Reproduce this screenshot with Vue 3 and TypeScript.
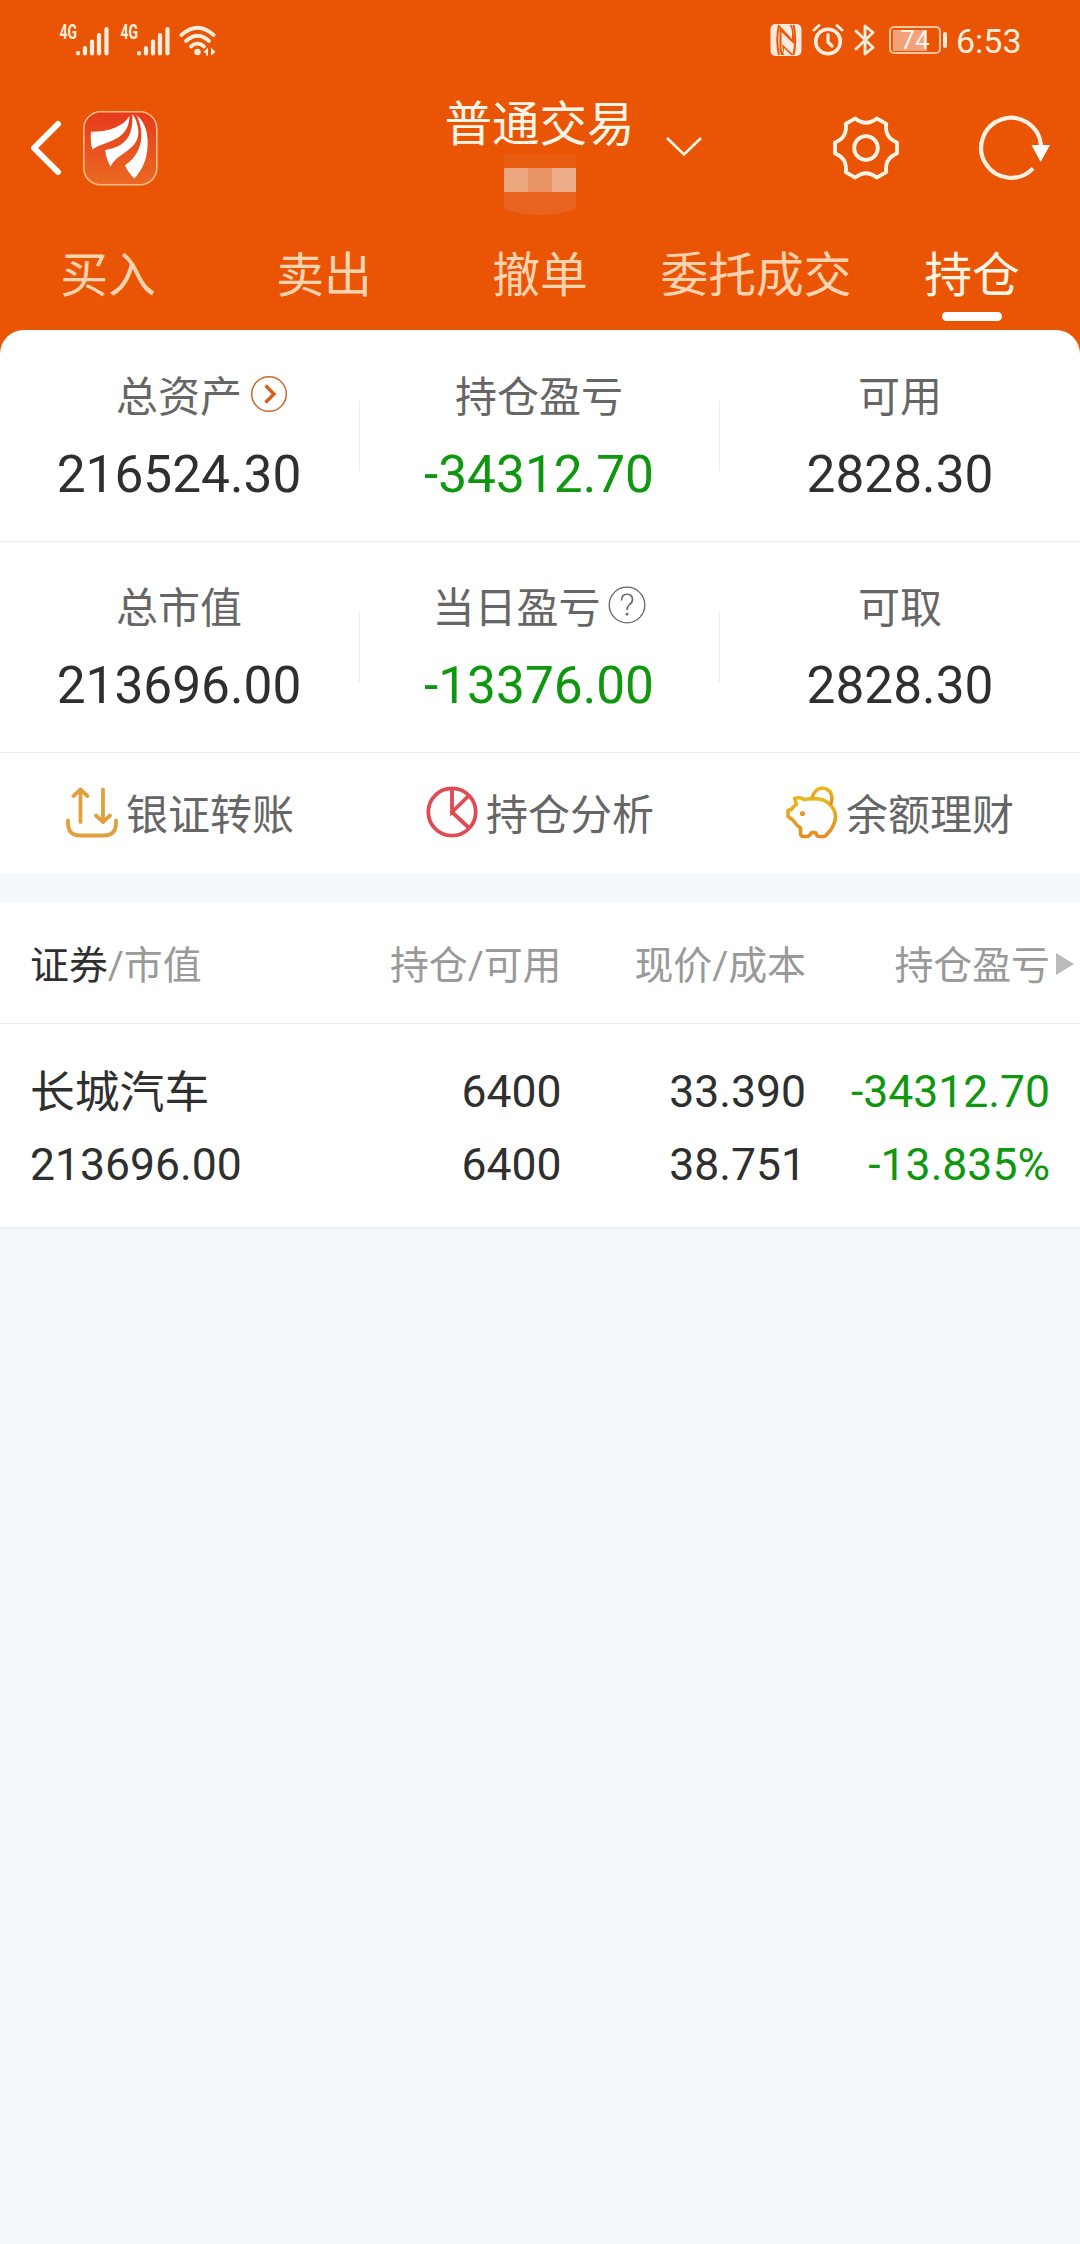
<script setup lang="ts">
interface Tab {
  label: string
  active?: boolean
}

interface Metric {
  label: string
  value: string
  green?: boolean
  icon?: 'arrow' | 'help'
}

const tabs: Tab[] = [
  { label: '买入' },
  { label: '卖出' },
  { label: '撤单' },
  { label: '委托成交' },
  { label: '持仓', active: true },
]

const metricRows: Metric[][] = [
  [
    { label: '总资产', value: '216524.30', icon: 'arrow' },
    { label: '持仓盈亏', value: '-34312.70', green: true },
    { label: '可用', value: '2828.30' },
  ],
  [
    { label: '总市值', value: '213696.00' },
    { label: '当日盈亏', value: '-13376.00', green: true, icon: 'help' },
    { label: '可取', value: '2828.30' },
  ],
]

const holdings = [
  {
    name: '长城汽车',
    marketValue: '213696.00',
    amount: '6400',
    available: '6400',
    price: '33.390',
    cost: '38.751',
    profit: '-34312.70',
    rate: '-13.835%',
  },
]
</script>

<template>
  <div class="screen">
    <header class="header">
      <div class="status">
        <div class="status-left">
          <svg v-for="n in 2" :key="n" class="signal" width="52" height="42" viewBox="0 -8 52 42">
            <text x="0.500" y="15.500" textLength="17.500" lengthAdjust="spacingAndGlyphs">4G</text>
            <g stroke="#ffeedd" stroke-width="4.200" stroke-linecap="round">
              <path d="M19 30.500V30M26 30.500V25M33 30.500V18.500M40 30.500V12M47.500 30.500V6" />
            </g>
          </svg>
          <svg class="wifi" width="38" height="34" viewBox="0 0 38 34">
            <g fill="none" stroke="#ffeedd" stroke-width="3.800" stroke-linecap="round">
              <path d="M2.500 12Q18.500 -2.500 34.500 12" />
              <path d="M7 18Q18.500 7.500 30 18" />
              <path d="M12 23.500Q18.500 17.500 25 23.500" />
            </g>
            <circle cx="18.500" cy="29" r="3.200" fill="#ffeedd" />
            <path d="M24 29.500l5-5v8h-2v-3zM32 24.500l4.500 4.500-4.500 3.500z" fill="#ffeedd" />
          </svg>
        </div>
        <div class="status-right">
          <svg class="nfc" width="32" height="32" viewBox="0 0 32 32">
            <rect x="0.500" y="0" width="31" height="32" rx="5" fill="#ffe8dc" />
            <g fill="none" stroke="#e95504" stroke-width="2" stroke-linejoin="round">
              <path d="M9 1Q5.500 16 9 31" />
              <path d="M23.500 1Q27 16 23.500 31" />
            </g>
            <path d="M9 1L22 15V8Q22 4 19.500 1H21.500Q24.500 6 24 20L11.500 8V24Q12 28 14 31L11 31Q9 26 9.500 20V3ZM14 31L12 20L23.500 31L21 31L14 24Z" fill="#e95504" />
          </svg>
          <svg class="alarm" width="32" height="34" viewBox="0 0 32 34">
            <g fill="none" stroke="#ffeedd" stroke-linecap="round">
              <circle cx="16" cy="18.500" r="12.300" stroke-width="3.600" />
              <path d="M16 11.500v7.500l4 4" stroke-width="3.200" />
              <path d="M2 7l5-4.500M30 7l-5-4.500" stroke-width="3" />
            </g>
          </svg>
          <svg class="bluetooth" width="22" height="34" viewBox="0 0 22 34">
            <path d="M2 8L19 24.500L11 31V3L19 9.500L2 26" fill="none" stroke="#ffeedd" stroke-width="2.800" stroke-linejoin="round" stroke-linecap="round" />
          </svg>
          <div class="battery"><span class="battery-level"></span><span class="battery-text">74</span></div>
          <span class="battery-cap"></span>
          <span class="clock">6:53</span>
        </div>
      </div>

      <div class="nav">
        <div class="nav-left">
          <svg width="34" height="58" viewBox="0 0 34 58">
            <path d="M29 5L5 29L29 53" fill="none" stroke="#fff" stroke-width="6" stroke-linecap="round" stroke-linejoin="round" />
          </svg>
          <svg class="logo" width="75" height="75" viewBox="0 0 76 76">
            <defs>
              <linearGradient id="logo-fill" x1="0" y1="0" x2="0" y2="1">
                <stop offset="0" stop-color="#e63a1c" />
                <stop offset="1" stop-color="#eb6a22" />
              </linearGradient>
            </defs>
            <rect x="0.800" y="0.800" width="74" height="74" rx="17" fill="url(#logo-fill)" stroke="#ffb985" stroke-width="1.600" />
            <g fill="#fff">
              <path d="M47 5C41 15 28 21 8 21C7.500 28 8 33 9.500 39C22 30 47 31 47 5Z" />
              <path d="M50 3C51 26 43 36 22.500 39.500C23 46 25 51 28 56.500C34 42 58 40 56 19C55 11 52.500 6 50 3Z" />
              <path d="M54 4C63 21 61 43 42.500 55C44.500 60 48 64.500 52 68.500C62 58 66 45 65.500 30C65 18 61 9 54 4Z" />
            </g>
          </svg>
        </div>
        <div class="account">
          <span class="account-title">普通交易</span>
          <svg class="chevron" width="38" height="22" viewBox="0 0 38 22">
            <path d="M2 2L19 18.500L36 2" fill="none" stroke="#fff5e6" stroke-width="2.600" />
          </svg>
          <div class="mask">
            <i class="mask-a"></i><i class="mask-b"></i><i class="mask-c"></i>
          </div>
        </div>
        <div class="nav-right">
          <svg width="70" height="70" viewBox="-35 -35 70 70">
            <g fill="none" stroke="#fff5e6" stroke-width="3.800" stroke-linejoin="round">
              <path d="M31-5.500L31 5.500Q18.200 10.500 20.300 24.100L10.700 29.600Q0 21-10.700 29.600L-20.300 24.100Q-18.200 10.500-31 5.500L-31-5.500Q-18.200-10.500-20.300-24.100L-10.700-29.600Q0-21 10.700-29.600L20.300-24.100Q18.200-10.500 31-5.500Z" />
              <circle r="11.800" />
            </g>
          </svg>
          <svg class="refresh" width="80" height="70" viewBox="-40 -35 80 70">
            <path d="M30-3A30 30 0 1 0 22 20.400" fill="none" stroke="#fff0e4" stroke-width="4.200" />
            <path d="M20.500-3H39L29.600 14Z" fill="#fff" />
          </svg>
        </div>
      </div>

      <nav class="tabs">
        <div v-for="tab in tabs" :key="tab.label" class="tab" :class="{ active: tab.active }">
          <span class="tab-label">{{ tab.label }}</span>
          <span class="tab-bar"></span>
        </div>
      </nav>
    </header>

    <div class="card-wrap">
      <section class="card">
        <div v-for="(row, i) in metricRows" :key="i" class="metrics">
          <div v-for="m in row" :key="m.label" class="metric">
            <div class="metric-label">
              <span>{{ m.label }}</span>
              <svg v-if="m.icon === 'arrow'" class="icon-arrow" width="38" height="38" viewBox="0 0 38 38" fill="none">
                <circle cx="19" cy="19" r="17.300" stroke="#c66a34" stroke-width="1.500" />
                <path d="M15.500 10.500L24 19L15.500 27.500" stroke="#dc5a14" stroke-width="3.200" />
              </svg>
              <svg v-if="m.icon === 'help'" class="icon-help" width="38" height="38" viewBox="0 0 38 38" fill="none">
                <circle cx="19" cy="19" r="17.800" stroke="#666" stroke-width="1.300" />
                <path d="M13.500 14.500Q13.500 8.200 19 8.200Q24.500 8.200 24.500 13.500Q24.500 16.500 21.500 18.500Q19 20.500 19 24" stroke="#666" stroke-width="1.600" />
                <circle cx="19" cy="28.200" r="1.400" fill="#666" />
              </svg>
            </div>
            <div class="metric-value" :class="{ green: m.green }">{{ m.value }}</div>
          </div>
        </div>

        <div class="actions">
          <div class="action">
            <svg width="54" height="54" viewBox="0 0 54 54">
              <g fill="none" stroke="#e2a03c" stroke-width="3.800" stroke-linecap="round" stroke-linejoin="round">
                <path d="M3 35.500V38Q3 50.500 15 50.500H39Q51 50.500 51 38V35.500" />
                <path d="M15.500 37V4.500M8.500 11L15.500 4.500L22.500 11" />
                <path d="M38 4.500V37M31 30.500L38 37L45 30.500" />
              </g>
            </svg>
            <span>银证转账</span>
          </div>
          <div class="action">
            <svg width="54" height="54" viewBox="0 0 54 54">
              <g fill="none" stroke="#e04a52" stroke-width="3.800">
                <circle cx="27" cy="27" r="23.700" />
                <path d="M27 3.500V27L44 10.500M27 27L44 43" />
              </g>
            </svg>
            <span>持仓分析</span>
          </div>
          <div class="action">
            <svg width="54" height="54" viewBox="0 0 54 54">
              <defs>
                <linearGradient id="pig-stroke" x1="0" y1="0" x2="0" y2="1">
                  <stop offset="0" stop-color="#e9b81f" />
                  <stop offset="1" stop-color="#e58c22" />
                </linearGradient>
              </defs>
              <g fill="none" stroke="url(#pig-stroke)" stroke-width="3.600" stroke-linejoin="round">
                <path d="M11.500 19.500L9.500 13.500Q15 11.500 19 14.500Q36 11.500 44 18.500Q55 29 47.500 42Q45.500 46 42.500 48.500Q41 51.500 38 51.500H34Q32 51.500 30.500 47.500H26.500Q24.500 51.500 22 51.500H18Q15.500 51.500 15.500 47V43Q11 40 8.500 35.500L3 31.500V25.500L7 24Q8 21.500 11.500 19.500Z" />
                <path d="M27 13Q30 3 37.500 3Q46.500 4 47 13Q47 16 45.500 19.500" />
              </g>
              <circle cx="17.500" cy="28.500" r="2.600" fill="#e59a2c" />
            </svg>
            <span>余额理财</span>
          </div>
        </div>
      </section>
    </div>

    <section class="holdings">
      <div class="row head">
        <div class="col first"><b>证券</b>/市值</div>
        <div class="col">持仓/可用</div>
        <div class="col">现价/成本</div>
        <div class="col">持仓盈亏<i class="more"></i></div>
      </div>
      <div v-for="h in holdings" :key="h.name" class="row body">
        <div class="col first"><p class="stock">{{ h.name }}</p><p>{{ h.marketValue }}</p></div>
        <div class="col"><p>{{ h.amount }}</p><p>{{ h.available }}</p></div>
        <div class="col"><p>{{ h.price }}</p><p>{{ h.cost }}</p></div>
        <div class="col green"><p>{{ h.profit }}</p><p>{{ h.rate }}</p></div>
      </div>
    </section>
  </div>
</template>

<style>
body {
  margin: 0;
  background: #f4f8fb;
}
</style>

<style scoped>
* {
  box-sizing: border-box;
}

svg {
  display: block;
  flex: none;
}

.screen {
  width: 1080px;
  min-height: 2244px;
  background: #f4f8fb;
  color: #2f2f2f;
  font-family: Roboto, 'Noto Sans CJK SC', sans-serif;
  overflow: hidden;
}

.header {
  height: 330px;
  background: #e95504;
}

.status {
  display: flex;
  justify-content: space-between;
  height: 80px;
  padding: 23px 58.500px 0 59px;
}

.status-left,
.status-right {
  display: flex;
  align-items: flex-start;
}

.signal {
  margin: -8px 9px 0 0;
}

.signal text {
  font: 700 19.500px Roboto, sans-serif;
  fill: #ffeedd;
}

.wifi {
  margin-left: -2px;
}

.nfc {
  margin-top: 1px;
}

.alarm {
  margin-left: 10px;
}

.bluetooth {
  margin-left: 10px;
}

.battery {
  display: grid;
  width: 52px;
  height: 28px;
  margin: 3px 0 0 13px;
  padding: 2px;
  border: 2px solid #ffc49a;
  border-radius: 5px;
}

.battery-level,
.battery-text {
  grid-area: 1 / 1;
}

.battery-level {
  width: 34px;
  background: #f4a27b;
}

.battery-text {
  color: #fff2e8;
  font-size: 26px;
  line-height: 21px;
  text-align: center;
}

.battery-cap {
  width: 4px;
  height: 16px;
  margin: 9px 0 0 2px;
  border-radius: 2px;
  background: #ffe6d5;
}

.clock {
  margin-left: 9px;
  color: #ffeedd;
  font-size: 34px;
  line-height: 36px;
}

.nav {
  display: grid;
  grid-template-columns: 300px 480px 300px;
  height: 140px;
}

.nav-left {
  display: flex;
  align-items: center;
  height: 136px;
  padding-left: 29px;
}

.logo {
  margin: 1px 0 0 20px;
}

.account {
  display: grid;
  grid-template-columns: 1fr 192px 1fr;
  grid-template-rows: 75px 65px;
}

.account-title {
  grid-column: 2;
  color: #fff5e6;
  font-family: 'Noto Sans CJK SC', sans-serif;
  font-size: 47.500px;
  line-height: 60px;
  padding: 11px 1px 0 0;
  text-align: center;
  white-space: nowrap;
}

.chevron {
  margin: 56px 0 0 29px;
}

.mask {
  grid-column: 2;
  display: flex;
  justify-self: center;
  width: 72px;
  height: 60px;
  padding: 13px 0 23px;
  border-radius: 0 0 50% 50% / 0 0 9px 9px;
  background: linear-gradient(#e95d12 13px, #e96420 13px);
}

.mask i {
  width: 24px;
  height: 24px;
}

.mask-a {
  background: #eca77f;
}

.mask-b {
  background: #ea9566;
}

.mask-c {
  background: #edac88;
}

.nav-right {
  display: flex;
  align-items: center;
  height: 136px;
  padding-left: 50.500px;
}

.refresh {
  margin-left: 70.500px;
}

.tabs {
  display: grid;
  grid-template-columns: repeat(5, 216px);
  height: 110px;
}

.tab {
  display: flex;
  flex-direction: column;
  align-items: center;
  padding-top: 22px;
  color: #ffd3b0;
  font-family: 'Noto Sans CJK SC', sans-serif;
  font-size: 47.800px;
  line-height: 60px;
}

.tab.active {
  color: #fff5e6;
}

.tab-bar {
  width: 60px;
  height: 9px;
  margin-top: 10px;
  border-radius: 5px;
}

.active .tab-bar {
  background: #fff;
}

.card-wrap {
  background: linear-gradient(#e95504 30px, #fff 30px);
}

.card {
  height: 543px;
  padding-top: 1px;
  border-radius: 24px 24px 0 0;
  background: #fff;
}

.metrics {
  display: grid;
  grid-template-columns: repeat(3, 1fr);
  height: 211px;
  border-bottom: 1px solid #ececec;
}

.metric {
  padding: 33px 2px 0 0;
  text-align: center;
  background: linear-gradient(#ececec, #ececec) right 70px / 1px 70px no-repeat;
}

.metric:last-child {
  padding-right: 0;
  background: none;
}

.metric-label {
  display: flex;
  justify-content: center;
  align-items: center;
  height: 60px;
  color: #666;
  font-family: 'Noto Sans CJK SC', sans-serif;
  font-size: 42px;
  line-height: 60px;
}

.icon-arrow {
  margin: 0 -46px 0 8px;
}

.icon-help {
  margin: 0 0 0 7px;
}

.metric-value {
  margin-top: 21px;
  font-size: 51.400px;
  line-height: 60px;
}

.green {
  color: #0f970f;
}

.actions {
  display: grid;
  grid-template-columns: repeat(3, 1fr);
  height: 120px;
}

.action {
  display: flex;
  align-items: center;
  justify-content: center;
  gap: 7px;
  height: 118px;
  padding-right: 1px;
  color: #666;
  font-family: 'Noto Sans CJK SC', sans-serif;
  font-size: 42px;
  line-height: 60px;
}

.holdings {
  height: 326px;
  margin-top: 30px;
  border-bottom: 2px solid #eeeff0;
  background: #fff;
}

.row {
  display: grid;
  grid-template-columns: 263px 268.500px 244.500px 244px;
  padding-left: 30px;
}

.col {
  text-align: right;
  white-space: nowrap;
}

.first {
  text-align: left;
}

.head {
  height: 121px;
  border-bottom: 1px solid #ececec;
  color: #999;
  font-size: 38.900px;
  line-height: 60px;
  padding-top: 33px;
}

.head b {
  color: #2f2f2f;
  font-weight: 400;
}

.more {
  display: inline-block;
  width: 0;
  margin: 0 -24px 0 6px;
  border-left: 18px solid #bbb;
  border-top: 11px solid transparent;
  border-bottom: 11px solid transparent;
  vertical-align: 4px;
}

.body {
  padding-top: 32px;
  font-size: 44.500px;
  line-height: 73px;
}

.body p {
  height: 73px;
  margin: 0;
}

.body .stock {
  font-family: 'Noto Sans CJK SC', sans-serif;
  font-size: 44.800px;
  line-height: 66px;
}
</style>
